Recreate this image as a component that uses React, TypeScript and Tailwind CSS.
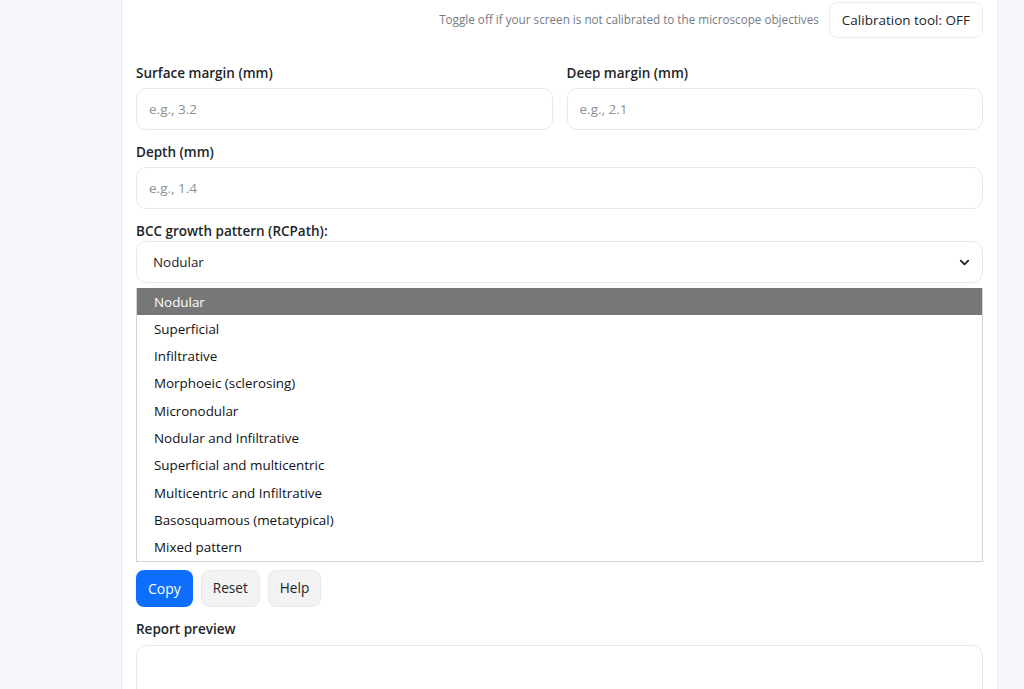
import { ChevronDown } from 'lucide-react'

const patterns = [
  'Nodular',
  'Superficial',
  'Infiltrative',
  'Morphoeic (sclerosing)',
  'Micronodular',
  'Nodular and Infiltrative',
  'Superficial and multicentric',
  'Multicentric and Infiltrative',
  'Basosquamous (metatypical)',
  'Mixed pattern',
]

function Field({ label, placeholder }: { label: string; placeholder: string }) {
  return (
    <div className="flex flex-col">
      <label className="h-[20px] leading-[20px] text-[13.5px] font-semibold text-[#212529] mb-[5px]">{label}</label>
      <input
        placeholder={placeholder}
        className="h-[42px] w-full rounded-[10px] border border-[#e8e9ec] px-[12px] text-[13.5px] text-[#212529] placeholder:text-[#8c9096] outline-none"
      />
    </div>
  )
}

export default function App() {
  return (
    <main className="min-h-screen bg-[#f5f5fa] flex" style={{ fontFamily: '"Open Sans", "Liberation Sans", sans-serif' }}>
      <div className="w-[122px] shrink-0 border-r border-[#e6e6ee]" />

      <div className="w-[876px] shrink-0 bg-white border-r border-[#ececf3] px-[14px] pt-[2px] pb-[40px]">
        {/* Calibration toggle */}
        <div className="flex items-center justify-end gap-[10px]">
          <span className="text-[11.7px] text-[#767b82]">Toggle off if your screen is not calibrated to the microscope objectives</span>
          <button className="h-[36px] px-[12px] rounded-[8px] border border-[#ececf0] text-[13.5px] text-[#212529] bg-white">
            Calibration tool: OFF
          </button>
        </div>

        {/* Margins */}
        <div className="grid grid-cols-2 gap-[14px] mt-[25px]">
          <Field label="Surface margin (mm)" placeholder="e.g., 3.2" />
          <Field label="Deep margin (mm)" placeholder="e.g., 2.1" />
        </div>

        <div className="mt-[12px]">
          <Field label="Depth (mm)" placeholder="e.g., 1.4" />
        </div>

        {/* Growth pattern select with open list */}
        <div className="mt-[12px] flex flex-col">
          <label className="h-[20px] leading-[20px] text-[13.5px] font-semibold text-[#212529]">BCC growth pattern (RCPath):</label>
          <div className="relative">
            <div className="h-[42px] w-full rounded-[10px] border border-[#e8e9ec] pl-[16px] pr-[10px] flex items-center justify-between text-[13.4px] text-[#212529]">
              <span>Nodular</span>
              <ChevronDown className="w-[15px] h-[15px] text-[#212529]" strokeWidth={3} />
            </div>
            <ul className="absolute left-0 right-0 top-[47px] z-10 bg-white border border-[#d4d4d4] border-t-0 text-[13.4px] text-[#111111]">
              {patterns.map((p, i) => (
                <li
                  key={p}
                  className={`h-[27.3px] flex items-center pl-[17px] ${i === 0 ? 'bg-[#777777] text-white' : ''}`}
                >
                  {p}
                </li>
              ))}
            </ul>

            {/* fields hidden behind the open list */}
            <div className="mt-[12px] flex flex-col gap-[33px]">
              <Field label="Peripheral margin (mm)" placeholder="e.g., 4.0" />
              <Field label="Perineural invasion" placeholder="Not identified" />
              <Field label="Lymphovascular invasion" placeholder="Not identified" />
            </div>
          </div>
        </div>

        {/* Actions */}
        <div className="flex items-center gap-[8px] mt-[8px]">
          <button className="h-[37px] px-[12px] rounded-[8px] bg-[#0d6efd] text-white text-[14px]">Copy</button>
          <button className="h-[37px] px-[11px] rounded-[8px] bg-[#f3f3f4] border border-[#e9e9ec] text-[#212529] text-[13.6px]">Reset</button>
          <button className="h-[37px] px-[11px] rounded-[8px] bg-[#f3f3f4] border border-[#e9e9ec] text-[#212529] text-[13.6px]">Help</button>
        </div>

        <div className="mt-[12px] flex flex-col">
          <label className="h-[20px] leading-[20px] text-[13.5px] font-semibold text-[#212529] mb-[6px]">Report preview</label>
          <textarea className="h-[160px] w-full rounded-[10px] border border-[#e8e9ec] resize-none outline-none" />
        </div>
      </div>

      <div className="flex-1" />
    </main>
  )
}
